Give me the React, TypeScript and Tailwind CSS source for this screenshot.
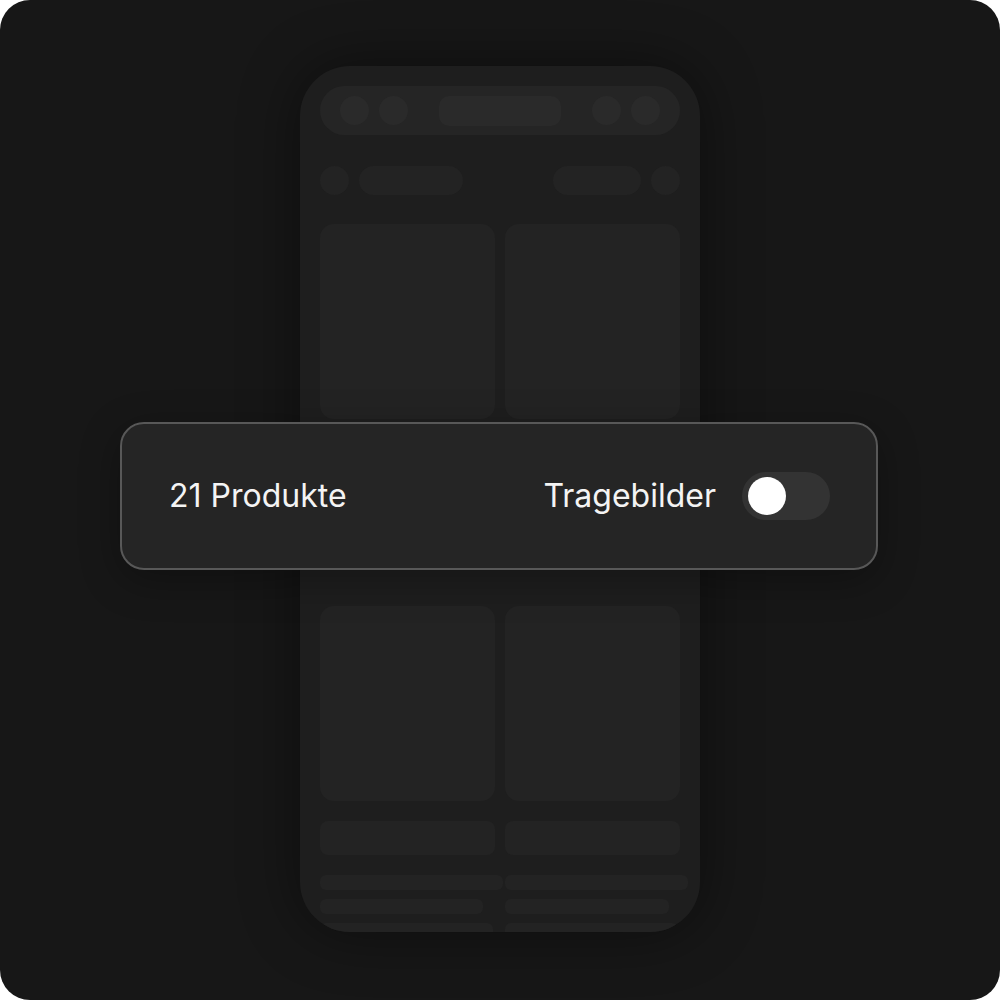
export default function App() {
  return (
    <div className="h-[1000px] w-[1000px] bg-white">
      <div className="relative flex h-[1000px] w-[1000px] justify-center overflow-hidden rounded-[30px] bg-[#171717]">
        <PhoneSkeleton />
        <FilterBar />
      </div>
    </div>
  );
}

function PhoneSkeleton() {
  return (
    <div className="mt-[66px] h-[866px] w-[400px] overflow-hidden rounded-[50px] bg-[#1e1e1e] px-5 pt-5 shadow-[0_0_60px_rgba(0,0,0,0.45)]">
      {/* top nav */}
      <div className="flex h-[49px] items-center justify-between rounded-full bg-[#252525] px-5">
        <div className="flex gap-[10px]">
          <span className="h-[29px] w-[29px] rounded-full bg-[#2a2a2a]" />
          <span className="h-[29px] w-[29px] rounded-full bg-[#2a2a2a]" />
        </div>
        <span className="h-[30px] w-[122px] rounded-[10px] bg-[#2a2a2a]" />
        <div className="flex gap-[10px]">
          <span className="h-[29px] w-[29px] rounded-full bg-[#2a2a2a]" />
          <span className="h-[29px] w-[29px] rounded-full bg-[#2a2a2a]" />
        </div>
      </div>

      {/* filter row */}
      <div className="mt-[30px] flex h-[30px] items-center justify-between">
        <div className="flex gap-[10px]">
          <span className="h-[29px] w-[29px] rounded-full bg-[#232323]" />
          <span className="h-[29px] w-[104px] rounded-full bg-[#232323]" />
        </div>
        <div className="flex gap-[10px]">
          <span className="h-[29px] w-[88px] rounded-full bg-[#232323]" />
          <span className="h-[29px] w-[29px] rounded-full bg-[#232323]" />
        </div>
      </div>

      {/* product grid */}
      <div className="mt-[29px] flex flex-col gap-[50px]">
        <div className="flex gap-[10px]">
          <ProductSkeleton lines={[183, 163, 173]} />
          <ProductSkeleton lines={[183, 164, 173]} />
        </div>
        <div className="flex gap-[10px]">
          <ProductSkeleton lines={[183, 163, 173]} />
          <ProductSkeleton lines={[183, 164, 173]} />
        </div>
      </div>
    </div>
  );
}

function ProductSkeleton({ lines }: { lines: number[] }) {
  return (
    <div className="flex w-[175px] flex-col">
      <div className="h-[195px] w-[175px] rounded-[14px] bg-[#232323]" />
      <div className="mt-5 h-[34px] w-[175px] rounded-[8px] bg-[#232323]" />
      <div className="mt-5 flex flex-col gap-[9px]">
        {lines.map((w, i) => (
          <div
            key={i}
            className="h-[15px] rounded-[6px] bg-[#232323]"
            style={{ width: w }}
          />
        ))}
      </div>
    </div>
  );
}

function FilterBar() {
  return (
    <div className="absolute left-[120px] top-[422px] flex h-[148px] w-[758px] items-center justify-between rounded-[24px] border-2 border-[#585858] bg-[#252525] pl-[47px] pr-[46px] shadow-[0_10px_40px_rgba(0,0,0,0.3)] [font-family:Inter,'Noto_Sans',sans-serif]">
      <span className="text-[32px] leading-none text-[#f4f4f4]">21 Produkte</span>
      <div className="flex items-center gap-[26px]">
        <span className="text-[32px] leading-none text-[#f4f4f4]">Tragebilder</span>
        <div className="flex h-[48px] w-[88px] items-center rounded-full bg-[#333333] pl-[6px]">
          <span className="h-[38px] w-[38px] rounded-full bg-white" />
        </div>
      </div>
    </div>
  );
}
